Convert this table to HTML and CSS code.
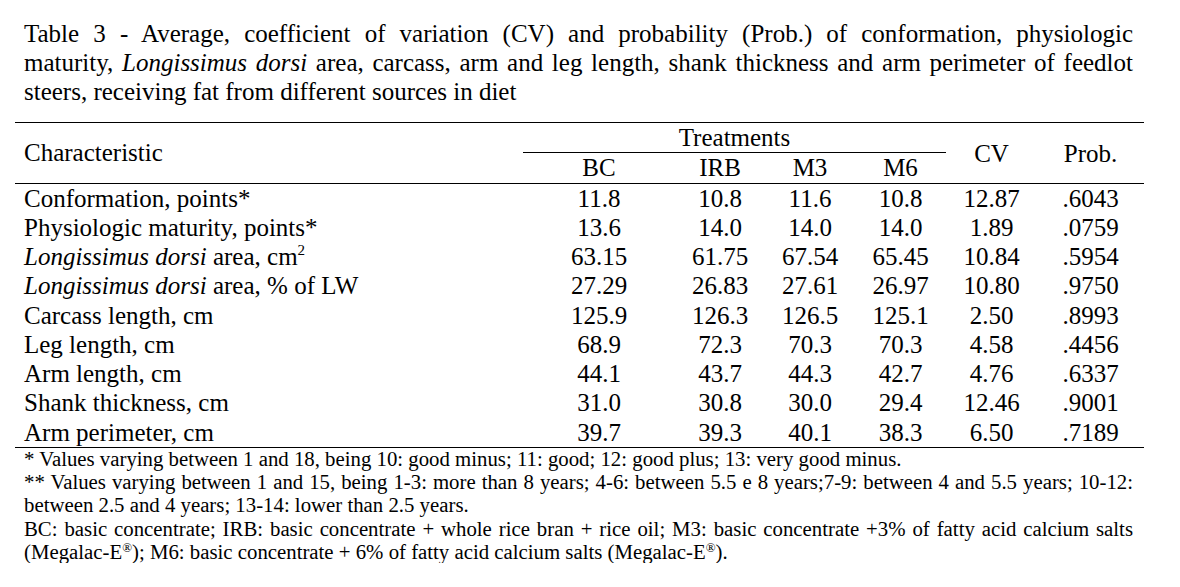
FILE: index.html
```html
<!DOCTYPE html>
<html>
<head>
<meta charset="utf-8">
<link rel="stylesheet" href="styles.css">
</head>
<body>
<div class="page">
  <p class="title"><span class="tl">Table 3 - Average, coefficient of variation (CV) and probability (Prob.) of conformation, physiologic</span><span class="tl">maturity, <i>Longissimus dorsi</i> area, carcass, arm and leg length, shank thickness and arm perimeter of feedlot</span><span class="tl last">steers, receiving fat from different sources in diet</span></p>
  <table class="data">
    <colgroup>
      <col class="c-char"><col class="c-bc"><col class="c-irb"><col class="c-m3"><col class="c-m6"><col class="c-cv"><col class="c-prob">
    </colgroup>
    <thead>
      <tr class="h1">
        <th rowspan="2" class="lbl">Characteristic</th>
        <th colspan="4" class="treat">Treatments</th>
        <th rowspan="2" class="top">CV</th>
        <th rowspan="2" class="top">Prob.</th>
      </tr>
      <tr class="h2">
        <th>BC</th><th>IRB</th><th>M3</th><th>M6</th>
      </tr>
    </thead>
    <tbody>
      <tr><td class="lbl">Conformation, points*</td><td>11.8</td><td>10.8</td><td>11.6</td><td>10.8</td><td>12.87</td><td>.6043</td></tr>
      <tr><td class="lbl">Physiologic maturity, points*</td><td>13.6</td><td>14.0</td><td>14.0</td><td>14.0</td><td>1.89</td><td>.0759</td></tr>
      <tr><td class="lbl"><i>Longissimus dorsi</i> area, cm<sup>2</sup></td><td>63.15</td><td>61.75</td><td>67.54</td><td>65.45</td><td>10.84</td><td>.5954</td></tr>
      <tr><td class="lbl"><i>Longissimus dorsi</i> area, % of LW</td><td>27.29</td><td>26.83</td><td>27.61</td><td>26.97</td><td>10.80</td><td>.9750</td></tr>
      <tr><td class="lbl">Carcass length, cm</td><td>125.9</td><td>126.3</td><td>126.5</td><td>125.1</td><td>2.50</td><td>.8993</td></tr>
      <tr><td class="lbl">Leg length, cm</td><td>68.9</td><td>72.3</td><td>70.3</td><td>70.3</td><td>4.58</td><td>.4456</td></tr>
      <tr><td class="lbl">Arm length, cm</td><td>44.1</td><td>43.7</td><td>44.3</td><td>42.7</td><td>4.76</td><td>.6337</td></tr>
      <tr><td class="lbl">Shank thickness, cm</td><td>31.0</td><td>30.8</td><td>30.0</td><td>29.4</td><td>12.46</td><td>.9001</td></tr>
      <tr class="last"><td class="lbl">Arm perimeter, cm</td><td>39.7</td><td>39.3</td><td>40.1</td><td>38.3</td><td>6.50</td><td>.7189</td></tr>
    </tbody>
  </table>
  <div class="notes">
    <p>* Values varying between 1 and 18, being 10: good minus; 11: good; 12: good plus; 13: very good minus.</p>
    <p>** Values varying between 1 and 15, being 1-3: more than 8 years; 4-6: between 5.5 e 8 years;7-9: between 4 and 5.5 years; 10-12: between 2.5 and 4 years; 13-14: lower than 2.5 years.</p>
    <p>BC: basic concentrate; IRB: basic concentrate + whole rice bran + rice oil; M3: basic concentrate +3% of fatty acid calcium salts (Megalac-E<sup class="reg">®</sup>); M6: basic concentrate + 6% of fatty acid calcium salts (Megalac-E<sup class="reg">®</sup>).</p>
  </div>
</div>
</body>
</html>
```
FILE: styles.css
```css
html, body {
  margin: 0;
  padding: 0;
  background: #fff;
}
body {
  font-family: "Liberation Serif", "Times New Roman", serif;
  color: #000;
}
.page {
  padding: 19px 36px 0 15px;
}
.title {
  margin: 0 11px 0 9px;
  font-size: 25px;
  line-height: 29px;
}
.title .tl {
  display: block;
  text-align: justify;
  text-align-last: justify;
  white-space: nowrap;
}
.title .tl.last {
  text-align-last: left;
}
.data {
  margin-top: 16px;
  border-collapse: collapse;
  font-size: 25px;
  line-height: 29.25px;
  table-layout: fixed;
  width: 1129px;
}
.c-char { width: 508px; }
.c-bc { width: 152px; }
.c-irb { width: 90px; }
.c-m3 { width: 90px; }
.c-m6 { width: 91px; }
.c-cv { width: 91px; }
.c-prob { width: 107px; }
.data th, .data td {
  padding: 0;
  font-weight: normal;
  text-align: center;
  white-space: nowrap;
}
.data thead tr.h1 th {
  border-top: 1px solid #000;
  height: 29px;
  vertical-align: middle;
}
.data thead tr.h2 th {
  height: 26px;
  vertical-align: middle;
}
.data thead th.top {
  vertical-align: top;
  padding-top: 1px;
}
.data thead th.lbl {
  vertical-align: middle;
}
.data th.treat {
  border-bottom: 1px solid #000;
}
.data thead tr.h2 th, .data thead th[rowspan] {
  border-bottom: 1px solid #000;
}
.data .lbl {
  text-align: left;
  padding-left: 9px;
}
.data tr.last td {
  border-bottom: 1px solid #000;
}
.data sup {
  font-size: 15px;
  line-height: 0;
  vertical-align: 10px;
}
.notes {
  margin: -1px 11px 0 9px;
  font-size: 20.8px;
  line-height: 23.3px;
}
.notes p {
  margin: 0;
  text-align: justify;
}
.notes sup.reg {
  font-size: 13px;
  line-height: 0;
  vertical-align: 7px;
}
```
